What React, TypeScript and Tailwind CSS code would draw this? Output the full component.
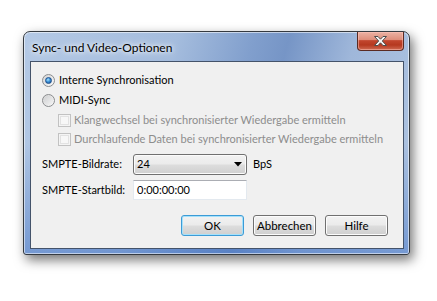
import React from 'react';

const Radio = ({ checked }: { checked?: boolean }) => (
    <span className="w-[13px] h-[13px] rounded-full border border-[#8a8c8f] bg-[linear-gradient(135deg,#d4d4d4,#fafafa)] flex items-center justify-center shrink-0">
        {checked ? (
            <span className="w-[7px] h-[7px] rounded-full bg-[radial-gradient(circle_at_40%_35%,#a8e4ff_0%,#3c93d8_45%,#174a8c_100%)] border border-[#1c4f8e]" />
        ) : (
            <span className="w-[9px] h-[9px] rounded-full bg-[linear-gradient(135deg,#cfd0d2,#f4f4f4)]" />
        )}
    </span>
);

const Checkbox = () => (
    <span className="w-[13px] h-[13px] border border-[#c2c2c2] bg-[#f4f4f4] shrink-0 flex items-center justify-center">
        <span className="w-[9px] h-[9px] border border-[#e2e2e2] bg-[#f7f7f7]" />
    </span>
);

const Button = ({ label, isDefault }: { label: string; isDefault?: boolean }) => (
    <div
        className={`w-[63px] h-[21px] rounded-[3px] flex items-center justify-center text-[11.5px] text-black bg-[linear-gradient(to_bottom,#f2f2f2_0%,#ebebeb_48%,#dddddd_52%,#cfcfcf_100%)] ${
            isDefault
                ? 'border border-[#3c9bd6] shadow-[inset_0_0_0_1px_#a5e1fb]'
                : 'border border-[#707070] shadow-[inset_0_0_0_1px_#fcfcfc]'
        }`}
    >
        {label}
    </div>
);

export default function App() {
    return (
        <div className="w-[437px] h-[301px] bg-white pt-[31px] pl-[23px] [font-family:Lato,'Noto_Sans',sans-serif]">
            <div className="w-[387px] flex flex-col rounded-t-[7px] rounded-b-[3px] border border-[#353a40] bg-[linear-gradient(to_bottom,rgba(255,255,255,0)_50%,rgba(60,110,195,0.5)_100%),linear-gradient(105deg,#b4c9e5_0%,#a4bcdd_35%,#819fcd_52%,#7695c6_60%,#9fb7da_75%,#afc5e2_100%)] shadow-[inset_0_0_0_1px_rgba(255,255,255,0.55),3px_5px_12px_rgba(0,0,0,0.55)]">
                <div className="h-[29px] flex items-start justify-between pl-[8px] pr-[5px]">
                    <span className="mt-[7px] text-[12px] text-black whitespace-nowrap [text-shadow:0_0_8px_#fff,0_0_4px_#fff]">
                        Sync- und Video-Optionen
                    </span>
                    <div className="w-[47px] h-[19px] rounded-b-[4px] border border-t-0 border-[#5a2a22] bg-[linear-gradient(to_bottom,#ebb2a4_0%,#df8f7c_42%,#c2462e_48%,#b5381f_72%,#cf6a52_100%)] shadow-[inset_0_0_0_1px_rgba(255,200,190,0.5)] flex items-center justify-center">
                        <svg width="13" height="10" viewBox="0 0 13 10">
                            <polygon
                                points="0.5,0.5 4,0.5 6.5,3.2 9,0.5 12.5,0.5 8.3,5 12.5,9.5 9,9.5 6.5,6.8 4,9.5 0.5,9.5 4.7,5"
                                fill="#f4f4f4"
                                stroke="#4d4d4d"
                                strokeWidth="1"
                                strokeLinejoin="round"
                            />
                        </svg>
                    </div>
                </div>
                <div className="mx-[6px] mr-[5px] mb-[5px] h-[188px] border border-[#44536a] bg-[#f0f0f0] flex flex-col pl-[11px] pt-[8px] text-[11px] text-black whitespace-nowrap">
                    <div className="h-[20px] flex items-center gap-[4px]">
                        <Radio checked />
                        <span>Interne Synchronisation</span>
                    </div>
                    <div className="h-[21px] flex items-center gap-[4px]">
                        <Radio />
                        <span>MIDI-Sync</span>
                    </div>
                    <div className="h-[19px] flex items-center gap-[3px] ml-[16px] text-[#8d8d8d]">
                        <Checkbox />
                        <span>Klangwechsel bei synchronisierter Wiedergabe ermitteln</span>
                    </div>
                    <div className="h-[19px] flex items-center gap-[3px] ml-[16px] text-[#8d8d8d]">
                        <Checkbox />
                        <span>Durchlaufende Daten bei synchronisierter Wiedergabe ermitteln</span>
                    </div>
                    <div className="mt-[5px] flex items-center">
                        <span className="w-[91px]">SMPTE-Bildrate:</span>
                        <div className="w-[114px] h-[21px] rounded-[3px] border border-[#707070] shadow-[inset_0_0_0_1px_#fbfbfb] bg-[linear-gradient(to_bottom,#f2f2f2_0%,#ebebeb_48%,#dddddd_52%,#cfcfcf_100%)] flex items-center justify-between pl-[3px] pr-[4px]">
                            <span>24</span>
                            <svg width="8" height="5" viewBox="0 0 8 5">
                                <polygon points="0,0 8,0 4,4.5" fill="#000" />
                            </svg>
                        </div>
                        <span className="ml-[6px]">BpS</span>
                    </div>
                    <div className="mt-[5px] flex items-center">
                        <span className="w-[91px]">SMPTE-Startbild:</span>
                        <div className="w-[114px] h-[20px] border border-[#e3e9ef] border-t-[#abadb3] bg-white flex items-center pl-[3px]">
                            0:00:00:00
                        </div>
                    </div>
                    <div className="mt-[15px] flex justify-end gap-[9px] pr-[15px]">
                        <Button label="OK" isDefault />
                        <Button label="Abbrechen" />
                        <Button label="Hilfe" />
                    </div>
                </div>
            </div>
        </div>
    );
}
